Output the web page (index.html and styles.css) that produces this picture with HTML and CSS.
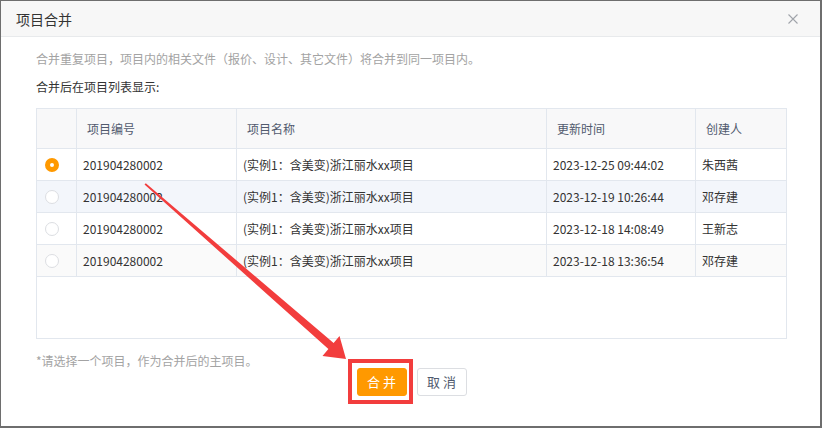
FILE: index.html
```html
<!DOCTYPE html>
<html lang="zh-CN">
<head>
<meta charset="utf-8">
<title>项目合并</title>
<link rel="stylesheet" href="styles.css">
</head>
<body>
<div class="dialog">
  <div class="dlg-head">
    <span class="title">项目合并</span>
    <svg class="close" width="10" height="10" viewBox="0 0 10 10"><path d="M0.5 0.5 L9.5 9.5 M9.5 0.5 L0.5 9.5" stroke="#a0a4aa" stroke-width="1.1" fill="none"/></svg>
  </div>
  <div class="dlg-body">
    <div class="desc">合并重复项目，项目内的相关文件（报价、设计、其它文件）将合并到同一项目内。</div>
    <div class="label">合并后在项目列表显示:</div>
    <div class="grid-table">
      <div class="row head">
        <div class="cell"></div>
        <div class="cell">项目编号</div>
        <div class="cell">项目名称</div>
        <div class="cell">更新时间</div>
        <div class="cell">创建人</div>
      </div>
      <div class="row">
        <div class="cell radio-cell"><span class="radio checked"></span></div>
        <div class="cell">201904280002</div>
        <div class="cell">(实例1：含美变)浙江丽水xx项目</div>
        <div class="cell">2023-12-25 09:44:02</div>
        <div class="cell">朱西茜</div>
      </div>
      <div class="row hover">
        <div class="cell radio-cell"><span class="radio"></span></div>
        <div class="cell">201904280002</div>
        <div class="cell">(实例1：含美变)浙江丽水xx项目</div>
        <div class="cell">2023-12-19 10:26:44</div>
        <div class="cell">邓存建</div>
      </div>
      <div class="row">
        <div class="cell radio-cell"><span class="radio"></span></div>
        <div class="cell">201904280002</div>
        <div class="cell">(实例1：含美变)浙江丽水xx项目</div>
        <div class="cell">2023-12-18 14:08:49</div>
        <div class="cell">王新志</div>
      </div>
      <div class="row stripe">
        <div class="cell radio-cell"><span class="radio"></span></div>
        <div class="cell">201904280002</div>
        <div class="cell">(实例1：含美变)浙江丽水xx项目</div>
        <div class="cell">2023-12-18 13:36:54</div>
        <div class="cell">邓存建</div>
      </div>
    </div>
    <div class="tip">*请选择一个项目，作为合并后的主项目。</div>
    <div class="actions">
      <button class="btn primary">合 并</button>
      <button class="btn">取 消</button>
    </div>
  </div>
</div>
<svg class="annot" width="822" height="428" viewBox="0 0 822 428">
  <polygon points="144.5,184.5 145.8,183.2 333.6,343 339.5,336 346,359 322.5,356 328.4,349" fill="#f23d3d"/>
  <rect x="350" y="361" width="61" height="41" fill="none" stroke="#f23d3d" stroke-width="4"/>
</svg>
</body>
</html>
```

FILE: styles.css
```css
html, body {
  margin: 0;
  padding: 0;
}
body {
  background: #6e6e6e;
  width: 822px;
  height: 428px;
  overflow: hidden;
  font-family: "Noto Sans CJK SC", "Noto Sans", sans-serif;
  font-size: 12px;
  color: #333;
}
.dialog {
  margin: 1px 0 0 1px;
  width: 819px;
  height: 425px;
  background: #fff;
}
.dlg-head {
  height: 36px;
  box-sizing: border-box;
  border-bottom: 1px solid #e8eaec;
  background: #f7f7f7;
  display: flex;
  align-items: center;
  justify-content: space-between;
  padding: 0 22px 0 15px;
}
.title {
  font-size: 14px;
  color: #333;
  line-height: 20px;
}
.close {
  display: block;
}
.dlg-body {
  padding: 12px 33px 0 35px;
}
.desc {
  line-height: 20px;
  color: #a3a3a3;
}
.label {
  margin-top: 8px;
  line-height: 20px;
  color: #333;
}
.grid-table {
  margin-top: 11px;
  width: 751px;
  height: 231px;
  box-sizing: border-box;
  border: 1px solid #e2e7ee;
}
.row {
  display: grid;
  grid-template-columns: 40px 160px 310px 149px 1fr;
  height: 32px;
  box-sizing: border-box;
  border-bottom: 1px solid #e2e7ee;
}
.row.head {
  height: 40px;
  background: #f8f8f9;
  color: #515a6e;
}
.row.hover {
  background: #f3f6fb;
}
.row.stripe {
  background: #fafafa;
}
.cell {
  box-sizing: border-box;
  border-right: 1px solid #e2e7ee;
  display: flex;
  align-items: center;
  padding-left: 6px;
  white-space: nowrap;
  color: #333;
}
.row.head .cell {
  padding-left: 10px;
  color: #515a6e;
}
.cell:last-child {
  border-right: none;
}
.cell.radio-cell {
  padding-left: 8px;
}
.radio {
  width: 14px;
  height: 14px;
  box-sizing: border-box;
  border-radius: 50%;
  border: 1px solid #dcdee2;
  background: #fff;
}
.radio.checked {
  border: 5px solid #ff9900;
  background: #fff;
}
.tip {
  margin-top: 15px;
  line-height: 14px;
  color: #a3a3a3;
}
.actions {
  display: flex;
  justify-content: center;
  gap: 10px;
}
.btn {
  width: 50px;
  height: 28px;
  padding: 0;
  box-sizing: border-box;
  border: 1px solid #dcdee2;
  border-radius: 3px;
  background: #fff;
  color: #515a6e;
  font-family: "Noto Sans CJK SC", "Noto Sans", sans-serif;
  font-size: 13px;
  line-height: 26px;
}
.btn.primary {
  background: #ff9900;
  border-color: #ff9900;
  color: #fff;
}
.annot {
  position: absolute;
  left: 0;
  top: 0;
  pointer-events: none;
}
```
